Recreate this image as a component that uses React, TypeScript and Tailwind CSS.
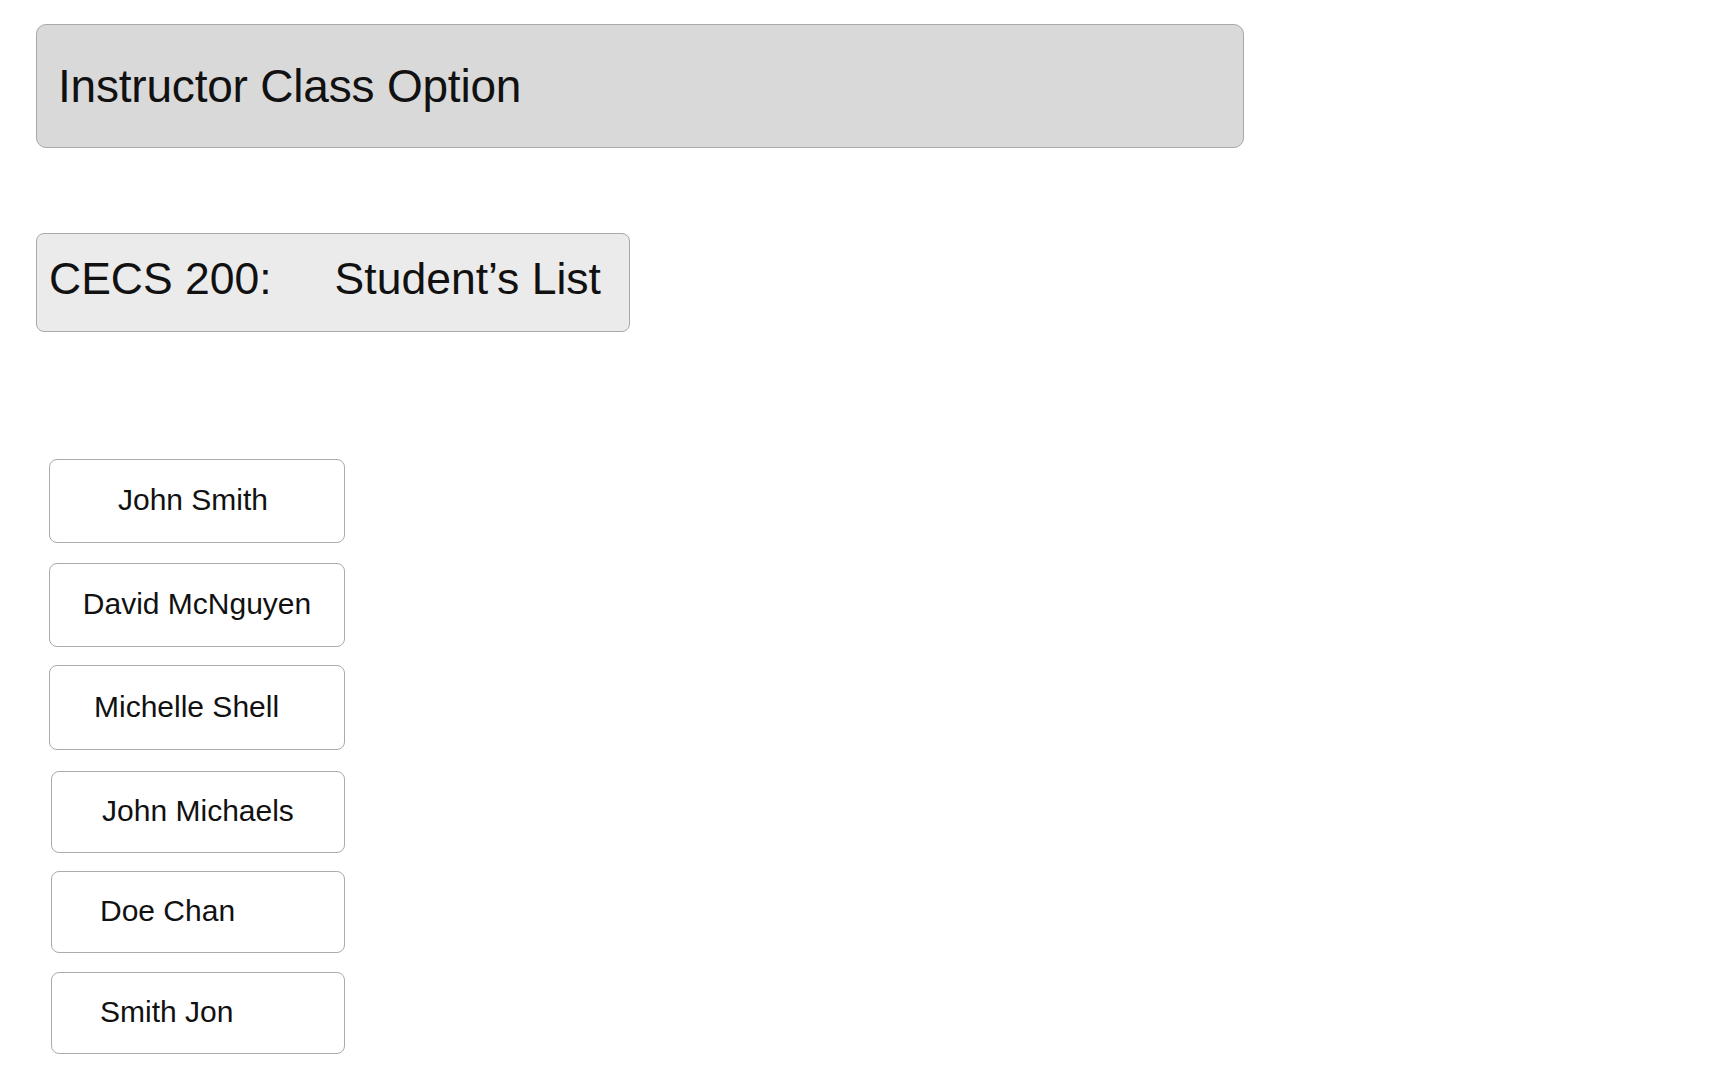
import React from 'react';

interface Student {
    name: string;
    box: string;
}

// spacing is a bit uneven in the mockup, so each row carries its own offsets
const students: Student[] = [
    { name: 'John Smith', box: 'mt-[127px] ml-[13px] w-[296px] h-[84px] justify-center pr-2' },
    { name: 'David McNguyen', box: 'mt-[20px] ml-[13px] w-[296px] h-[84px] justify-center' },
    { name: 'Michelle Shell', box: 'mt-[18px] ml-[13px] w-[296px] h-[85px] justify-start pl-[44px]' },
    { name: 'John Michaels', box: 'mt-[21px] ml-[15px] w-[294px] h-[82px] justify-center' },
    { name: 'Doe Chan', box: 'mt-[18px] ml-[15px] w-[294px] h-[82px] justify-start pl-[48px]' },
    { name: 'Smith Jon', box: 'mt-[19px] ml-[15px] w-[294px] h-[82px] justify-start pl-[48px]' },
];

export default function App() {
    return (
        <div className="bg-white pl-[36px] pt-[24px] text-[#111] font-['Liberation_Sans',Arial,sans-serif]">
            <div className="w-[1208px] h-[124px] rounded-[10px] border border-[#a9a9a9] bg-[#d9d9d9] flex items-center pl-[21px]">
                <h1 className="text-[46px] leading-none tracking-[-0.2px]">Instructor Class Option</h1>
            </div>

            <div className="mt-[85px] w-[594px] h-[99px] rounded-[8px] border border-[#a9a9a9] bg-[#ebebeb] flex items-center pl-[12px] pb-[6px] text-[44.5px] leading-none">
                <span>CECS 200:</span>
                <span className="ml-[63px]">Student’s List</span>
            </div>

            <div className="flex flex-col">
                {students.map((s) => (
                    <button
                        key={s.name}
                        className={`${s.box} flex items-center pb-[2px] rounded-[8px] border border-[#ababab] bg-white text-[30px] leading-none text-[#111]`}
                    >
                        {s.name}
                    </button>
                ))}
            </div>
        </div>
    );
}
